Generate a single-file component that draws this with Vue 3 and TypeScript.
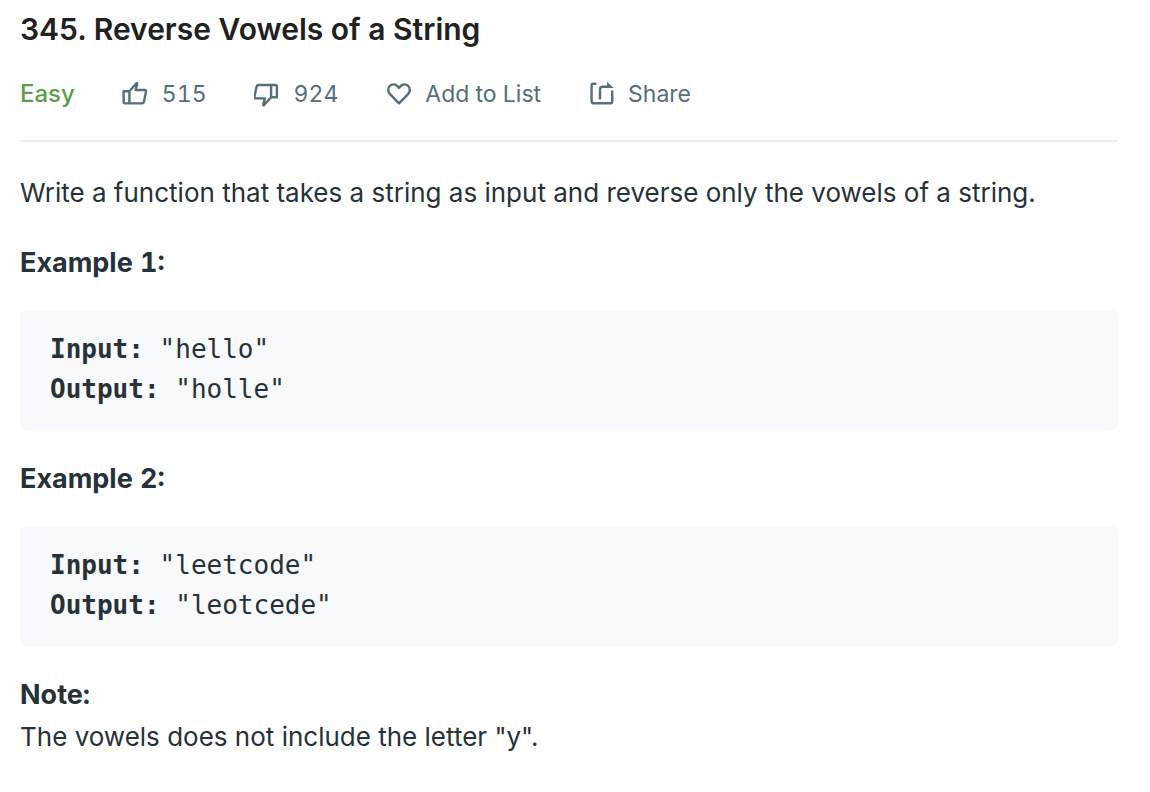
<script setup lang="ts">
interface Example {
  title: string
  input: string
  output: string
}

const likes: number = 515
const dislikes: number = 924
const examples: Example[] = [
  { title: 'Example 1:', input: '"hello"', output: '"holle"' },
  { title: 'Example 2:', input: '"leetcode"', output: '"leotcede"' },
]
</script>

<template>
  <main class="problem">
    <header class="header">
      <h1 class="title">345. Reverse Vowels of a String</h1>
      <div class="meta">
        <span class="difficulty">Easy</span>
        <button class="action like" type="button" aria-label="Like, 515">
          <svg class="icon" viewBox="0 0 26 26" aria-hidden="true">
            <path d="M1.6 10.2H7.4V22.4H3.2Q1.6 22.4 1.6 20.8ZM7.4 10.2L14.4 2.4Q15.4 1.5 15.2 3L13.6 9H22.8Q24.4 9 24 10.8L21.9 20.8Q21.6 22.4 20 22.4H7.4" />
          </svg>
          <span>{{ likes }}</span>
        </button>
        <button class="action dislike" type="button" aria-label="Dislike, 924">
          <svg class="icon" viewBox="0 0 26 26" aria-hidden="true">
            <path d="M22.9 16.2H17.1V4H21.3Q22.9 4 22.9 5.6ZM17.1 16.2L10.1 24Q9.1 24.9 9.3 23.4L10.9 17.4H1.7Q0.1 17.4 0.5 15.6L2.6 5.6Q2.9 4 4.5 4H17.1" />
          </svg>
          <span>{{ dislikes }}</span>
        </button>
        <button class="action favorite" type="button">
          <svg class="icon" viewBox="0 0 26 26" aria-hidden="true">
            <path d="M14 22.3L5.2 13.4C2.6 10.8 2.6 7.2 4.8 5C7 3 10.4 3.1 12.5 5.2L14 6.9L15.5 5.2C17.6 3.1 21 3 23.2 5C25.4 7.2 25.4 10.8 22.8 13.4Z" />
          </svg>
          <span>Add to List</span>
        </button>
        <button class="action share" type="button">
          <svg class="icon" viewBox="0 0 26 26" aria-hidden="true">
            <path d="M8.4 2.8H5.2Q3.6 2.8 3.6 4.4V20.6Q3.6 22.2 5.2 22.2H22.6Q24.2 22.2 24.2 20.6V9.4M12 18.6V8.4Q12 5.8 14.6 5.8H22" />
            <path class="arrow" d="M19 0.8L25.6 7H19Z" />
          </svg>
          <span>Share</span>
        </button>
      </div>
    </header>

    <section class="content">
      <p class="statement">Write a function that takes a string as input and reverse only the vowels of a string.</p>
      <template v-for="example in examples" :key="example.title">
        <h2 class="label">{{ example.title }}</h2>
        <pre class="sample"><strong>Input: </strong>{{ example.input }}
<strong>Output: </strong>{{ example.output }}</pre>
      </template>
      <h2 class="label note-label">Note:</h2>
      <p class="note">The vowels does not include the letter "y".</p>
    </section>
  </main>
</template>

<style>
body {
  margin: 0;
  background: #fff;
}
</style>

<style scoped>
.problem {
  padding: 8px 32px 32px 20px;
  font-family: Inter, "Liberation Sans", sans-serif;
  font-size: 26px;
  line-height: 42px;
  color: #263238;
}

.header {
  padding-bottom: 30px;
  border-bottom: 2px solid #eee;
}

.title {
  margin: 0 0 28px;
  font-size: 30px;
  font-weight: 600;
  line-height: 42px;
  color: #212121;
}

.meta {
  display: flex;
  align-items: center;
  gap: 47px;
  font-size: 23px;
  line-height: 32px;
  font-variant-numeric: tabular-nums;
  color: #546e7a;
}

.difficulty {
  font-size: 24px;
  font-weight: 500;
  color: #5a9e4b;
}

.action {
  display: flex;
  align-items: center;
  gap: 14px;
  padding: 0;
  border: 0;
  background: none;
  font: inherit;
  color: inherit;
  cursor: pointer;
}

.icon {
  width: 26px;
  height: 26px;
  fill: none;
  stroke: currentColor;
  stroke-width: 2.4;
  stroke-linejoin: round;
}

.arrow {
  fill: currentColor;
  stroke: none;
}

.content {
  padding-top: 30px;
}

.statement,
.note {
  margin: 0;
}

.label {
  margin: 28px 0 26px;
  font-size: 27px;
  font-weight: 700;
  font-variant-numeric: tabular-nums;
  line-height: 42px;
}

.note-label {
  margin-bottom: 0;
}

.sample {
  margin: 0;
  padding: 19px 30px 21px;
  border-radius: 6px;
  background: #f7f9fb;
  font-family: "DejaVu Sans Mono", monospace;
  font-size: 26px;
  line-height: 40px;
  white-space: pre-wrap;
}
</style>
